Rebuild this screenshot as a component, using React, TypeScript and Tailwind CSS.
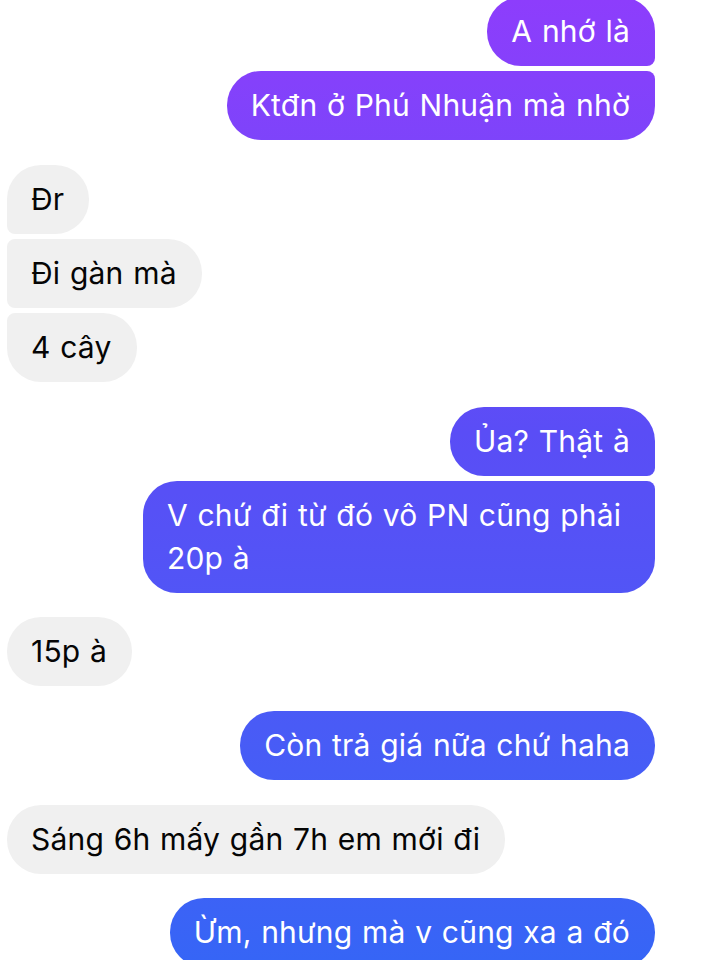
import React from "react";

type Msg = { text: string; me: boolean; r: string; gap: string };

const msgs: Msg[] = [
  { text: "A nhớ là", me: true, r: "rounded-[34px] rounded-br-[8px]", gap: "" },
  { text: "Ktđn ở Phú Nhuận mà nhờ", me: true, r: "rounded-[34px] rounded-tr-[8px]", gap: "mt-[5px]" },
  { text: "Đr", me: false, r: "rounded-[34px] rounded-bl-[8px]", gap: "mt-[25px]" },
  { text: "Đi gàn mà", me: false, r: "rounded-[34px] rounded-tl-[8px] rounded-bl-[8px]", gap: "mt-[5px]" },
  { text: "4 cây", me: false, r: "rounded-[34px] rounded-tl-[8px]", gap: "mt-[5px]" },
  { text: "Ủa? Thật à", me: true, r: "rounded-[34px] rounded-br-[8px]", gap: "mt-[25px]" },
  { text: "V chứ đi từ đó vô PN cũng phải 20p à", me: true, r: "rounded-[34px] rounded-tr-[8px]", gap: "mt-[5px]" },
  { text: "15p à", me: false, r: "rounded-[34px]", gap: "mt-[24px]" },
  { text: "Còn trả giá nữa chứ haha", me: true, r: "rounded-[34px]", gap: "mt-[25px]" },
  { text: "Sáng 6h mấy gần 7h em mới đi", me: false, r: "rounded-[34px]", gap: "mt-[25px]" },
  { text: "Ừm, nhưng mà v cũng xa a đó", me: true, r: "rounded-[34px]", gap: "mt-[24px]" },
];

export default function App() {
  return (
    <div
      className="w-[702px] h-[960px] overflow-hidden bg-white"
      style={{ fontFamily: "Inter, 'Noto Sans', sans-serif" }}
    >
      <div className="flex flex-col -mt-[3px] pl-[7px] pr-[47px]">
        {msgs.map((m, i) => (
          <div key={i} className={`flex ${m.me ? "justify-end" : "justify-start"} ${m.gap}`}>
            <div
              className={`max-w-[512px] pl-[24px] pr-[25px] py-[13px] text-[30px] leading-[43px] tracking-[0.2px] [word-spacing:1px] ${m.r} ${
                m.me
                  ? "text-white bg-fixed bg-linear-to-b from-[#8d3dfc] via-[#5a4df6] via-45% to-[#3665f6]"
                  : "bg-[#f0f0f0] text-[#050505]"
              }`}
            >
              {m.text}
            </div>
          </div>
        ))}
      </div>
    </div>
  );
}
